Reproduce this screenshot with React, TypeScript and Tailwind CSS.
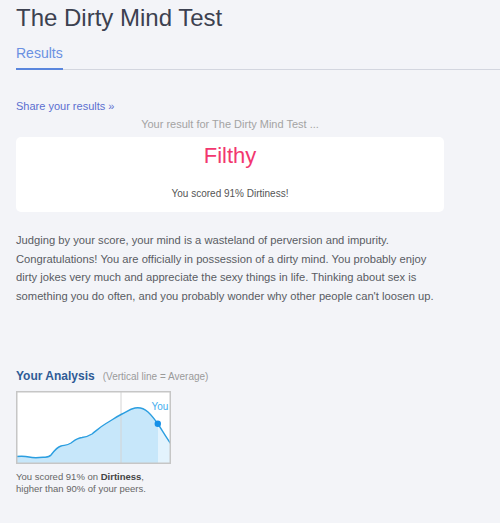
import React from "react";

const curve =
  "M0,65.5 C5,65 9,65 13,66 C17,67 22,66.8 27,66.3 C31,66 33,66.5 35,64 C38,60 41,56 45,55 C49,54 51,54.5 55,52 C59,49 61,47 66,46.5 C70,46 72,45.5 76,43 C80,40 84,36 90,32.5 C96,29 100,26 106,23 C111,20.5 114,18 119,17 C124,16 128,17.5 132,21 C136,24.5 139,29 142,33 C146,39 150,46 155,53";

const AnalysisChart = () => (
  <svg width="155" height="73" viewBox="0 0 155 73" className="block">
    <defs>
      <clipPath id="below">
        <path d={`${curve} L155,73 L0,73 Z`} />
      </clipPath>
    </defs>
    <rect x="0" y="0" width="155" height="73" fill="#ffffff" />
    <g clipPath="url(#below)">
      <rect x="0" y="0" width="142" height="73" fill="#c7e7fa" />
      <rect x="142" y="0" width="13" height="73" fill="#e3f3fd" />
    </g>
    <line x1="105" y1="1" x2="105" y2="72" stroke="#d4d4d4" strokeWidth="1" />
    <path d={curve} fill="none" stroke="#2b9ee0" strokeWidth="1.4" />
    <circle cx="141.8" cy="32.8" r="3.2" fill="#1590e8" />
    <text x="135.5" y="19" fontSize="10" fill="#45adee" fontFamily="'Liberation Sans', Arial, sans-serif">
      You
    </text>
    <rect x="0.75" y="0.75" width="153.5" height="71.5" fill="none" stroke="#c6c6c6" strokeWidth="1.5" />
  </svg>
);

const App = () => {
  return (
    <div
      className="min-h-[523px] w-full bg-[#f3f4f8] pt-[4px]"
      style={{ fontFamily: "'Liberation Sans', Arial, sans-serif" }}
    >
      <h1 className="px-[16px] text-[24px] leading-[28px] text-[#3c4150]">The Dirty Mind Test</h1>

      <div className="mt-[11px] ml-[16px] flex border-b border-[#d3d6df]">
        <div className="-mb-px border-b-2 border-[#5a86dd] pb-[5px] text-[14px] leading-[20px] text-[#6a90e2]">
          Results
        </div>
      </div>

      <div className="px-[16px]">
        <div className="mt-[28px] text-[11px] leading-[16px] text-[#5b6fd0]">Share your results »</div>

        <div className="w-[428px]">
          <div className="mt-[2px] text-center text-[11px] leading-[16px] text-[#a3a3a3]">
            Your result for The Dirty Mind Test ...
          </div>
          <div className="mt-[5px] rounded-[5px] bg-white pt-[6px] pb-[11px] text-center">
            <div className="text-[22px] leading-[26px] text-[#f2376f]">Filthy</div>
            <div className="mt-[18px] text-[10px] leading-[14px] text-[#555555]">You scored 91% Dirtiness!</div>
          </div>
        </div>

        <p className="mt-[19px] w-[428px] text-[11.2px] leading-[18.7px] text-[#595c63]">
          Judging by your score, your mind is a wasteland of perversion and impurity. Congratulations! You are officially
          in possession of a dirty mind. You probably enjoy dirty jokes very much and appreciate the sexy things in life.
          Thinking about sex is something you do often, and you probably wonder why other people can't loosen up.
        </p>

        <div className="mt-[62px] flex items-baseline gap-[8px] leading-[16px]">
          <span className="text-[12px] font-bold text-[#2f5b96]">Your Analysis</span>
          <span className="text-[10px] text-[#9a9a9a]">(Vertical line = Average)</span>
        </div>

        <div className="mt-[6px]">
          <AnalysisChart />
        </div>

        <div className="mt-[7px] text-[9.5px] leading-[12.5px] text-[#666666]">
          You scored 91% on <b className="text-[#444444]">Dirtiness</b>,
          <br />
          higher than 90% of your peers.
        </div>
      </div>
    </div>
  );
};

export default App;
